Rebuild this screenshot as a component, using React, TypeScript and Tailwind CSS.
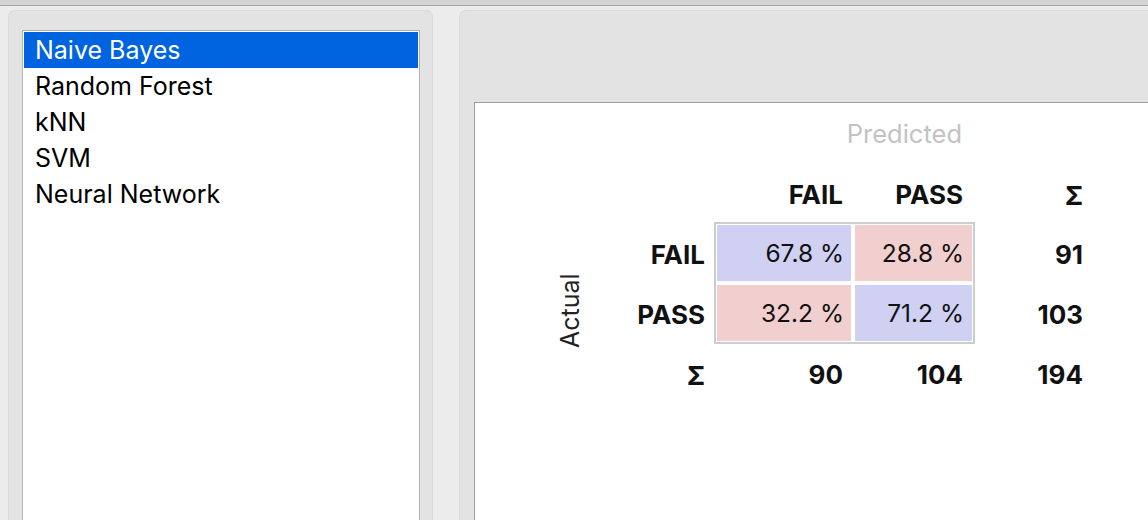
const models = ['Naive Bayes', 'Random Forest', 'kNN', 'SVM', 'Neural Network']

const blue = 'bg-[#d0d0f2]'
const pink = 'bg-[#f2cfcf]'

export default function App() {
  return (
    <div
      className="flex h-[520px] w-[1148px] flex-col overflow-hidden bg-[#ececec] text-[#111]"
      style={{ fontFamily: 'Inter, "Liberation Sans", sans-serif' }}
    >
      <div className="h-[6px] shrink-0 border-b border-[#a7a7a7] bg-[#d5d5d5]" />
      <div className="flex min-h-0 flex-1 gap-[26px] pl-[8px] pt-[4px]">
        {/* left: model list */}
        <div className="flex w-[425px] shrink-0 flex-col rounded-t-[7px] border border-b-0 border-[#dadada] bg-[#e3e3e3] pl-[13px] pr-[12px] pt-[19px]">
          <div className="flex-1 border border-b-0 border-[#b3b3b3] bg-white p-[1px]">
            {models.map((m, i) => (
              <div
                key={m}
                className={
                  'flex h-[36px] items-center pl-[11px] pt-[2px] text-[25px] ' +
                  (i === 0 ? 'bg-[#0064e1] text-white' : 'text-black')
                }
              >
                {m}
              </div>
            ))}
          </div>
        </div>

        {/* right: confusion matrix */}
        <div className="flex w-[720px] shrink-0 flex-col rounded-t-[7px] border border-b-0 border-[#dadada] bg-[#e3e3e3] pl-[14px] pt-[91px]">
          <div className="flex-1 border-l border-t border-[#9f9f9f] bg-white pl-[65px] pt-[1px]">
            <div className="grid grid-cols-[60px_114px_139px_122px_116px] grid-rows-[60px_60px_60px_60px_60px] text-[26px] font-bold">
              <div className="col-span-2 col-start-3 row-start-1 flex items-center justify-end pr-[13px] text-[25.5px] font-normal text-[#c3c3c3]">
                Predicted
              </div>

              <div className="col-start-3 row-start-2 flex items-center justify-end pr-[10px]">FAIL</div>
              <div className="col-start-4 row-start-2 flex items-center justify-end pr-[12px]">PASS</div>
              <div className="col-start-5 row-start-2 flex items-center justify-end pr-[8px] pt-[2px]">Σ</div>

              <div className="col-start-1 row-span-3 row-start-3 flex items-center justify-center pb-[6px]">
                <span className="-rotate-90 whitespace-nowrap text-[25px] font-normal text-[#222]">Actual</span>
              </div>

              <div className="col-start-2 row-start-3 flex items-center justify-end pr-[9px]">FAIL</div>
              <div className="col-start-2 row-start-4 flex items-center justify-end pr-[9px]">PASS</div>
              <div className="col-start-2 row-start-5 flex items-center justify-end pr-[9px] pt-[2px]">Σ</div>

              <div className="col-span-2 col-start-3 row-span-2 row-start-3 -mt-[2px] grid h-[122px] grid-cols-[134px_117px] grid-rows-[56px_56px] gap-[4px] self-start border-2 border-[#cdcdcd] p-[1px] text-[24.5px] font-normal">
                <div className={`flex items-center justify-end pr-[7px] ${blue}`}>67.8 %</div>
                <div className={`flex items-center justify-end pr-[8px] ${pink}`}>28.8 %</div>
                <div className={`flex items-center justify-end pr-[7px] ${pink}`}>32.2 %</div>
                <div className={`flex items-center justify-end pr-[8px] ${blue}`}>71.2 %</div>
              </div>

              <div className="col-start-5 row-start-3 flex items-center justify-end pr-[8px]">91</div>
              <div className="col-start-5 row-start-4 flex items-center justify-end pr-[8px]">103</div>

              <div className="col-start-3 row-start-5 flex items-center justify-end pr-[10px]">90</div>
              <div className="col-start-4 row-start-5 flex items-center justify-end pr-[12px]">104</div>
              <div className="col-start-5 row-start-5 flex items-center justify-end pr-[8px]">194</div>
            </div>
          </div>
        </div>
      </div>
    </div>
  )
}
